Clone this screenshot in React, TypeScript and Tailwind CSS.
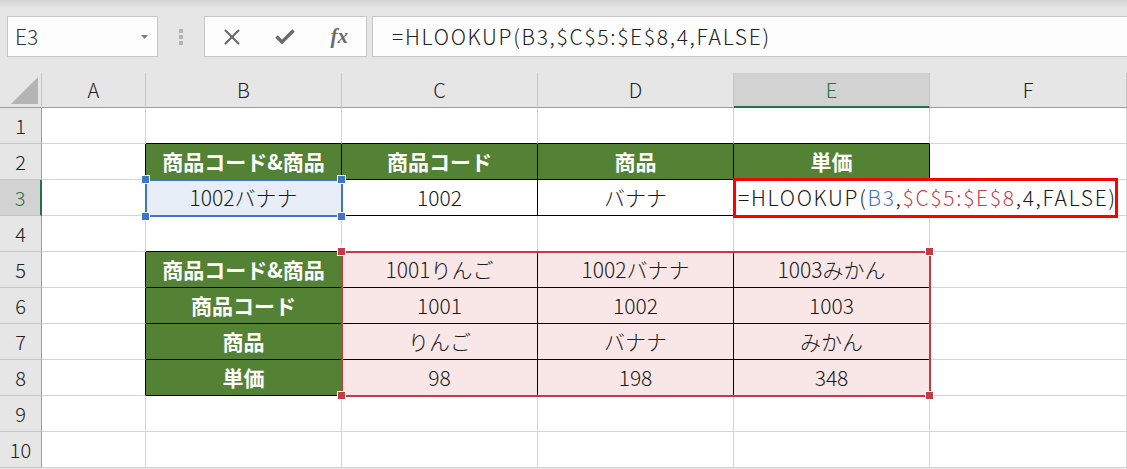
import React from "react";

const COLS = ["A", "B", "C", "D", "E", "F"];
const ROWS = [1, 2, 3, 4, 5, 6, 7, 8, 9, 10];

type Kind = "head" | "pink" | "sel" | "plain" | "formula";
type Cell = { text?: React.ReactNode; kind: Kind };

const heads = ["商品コード&商品", "商品コード", "商品", "単価"];
const lookup = [
  ["1001りんご", "1002バナナ", "1003みかん"],
  ["1001", "1002", "1003"],
  ["りんご", "バナナ", "みかん"],
  ["98", "198", "348"],
];

function inTable(r: number, c: number) {
  if (c < 1 || c > 4) return false;
  return r === 2 || r === 3 || (r >= 5 && r <= 8);
}

function FormulaText({ colored }: { colored?: boolean }) {
  return (
    <span className="tracking-[1.7px]">
      =HLOOKUP(
      <span className={colored ? "text-[#3f73c6]" : ""}>B3</span>,
      <span className={colored ? "text-[#c8414a]" : ""}>$C$5:$E$8</span>
      ,4,FALSE)
    </span>
  );
}

function cellAt(r: number, c: number): Cell {
  if (r === 2 && c >= 1 && c <= 4) return { text: heads[c - 1], kind: "head" };
  if (r >= 5 && r <= 8 && c === 1) return { text: heads[r - 5], kind: "head" };
  if (r >= 5 && r <= 8 && c >= 2 && c <= 4) return { text: lookup[r - 5][c - 2], kind: "pink" };
  if (r === 3 && c === 1) return { text: "1002バナナ", kind: "sel" };
  if (r === 3 && c === 2) return { text: "1002", kind: "plain" };
  if (r === 3 && c === 3) return { text: "バナナ", kind: "plain" };
  if (r === 3 && c === 4) return { text: <FormulaText colored />, kind: "formula" };
  return { kind: "plain" };
}

const bgOf: Record<Kind, string> = {
  head: "bg-[#548235] text-white font-bold",
  pink: "bg-[#f9e7e8] text-[#1a1a1a] font-light",
  sel: "bg-[#e8eef8] text-[#1a1a1a] font-light",
  plain: "bg-white text-[#1a1a1a] font-light",
  formula: "bg-white text-[#1a1a1a] font-light",
};

function Handle({ pos, color }: { pos: string; color: string }) {
  return <div className={`absolute h-[9px] w-[9px] border border-white ${color} ${pos}`} />;
}

function Toolbar() {
  return (
    <div className="flex h-[73px] items-start bg-[linear-gradient(to_bottom,#d3d3d3_0px,#e6e6e6_9px)] pt-[16px]">
      {/* name box */}
      <div className="ml-[7px] flex h-[41px] w-[151px] items-center justify-between border border-[#c6c6c6] bg-[#fdfdfd] pl-[7px] pr-[9px]">
        <span className="text-[21px] font-light text-[#333]">E3</span>
        <svg width="7" height="4" viewBox="0 0 7 4">
          <path d="M0 0h7L3.5 4z" fill="#7a7a7a" />
        </svg>
      </div>
      <div className="flex h-[41px] w-[46px] flex-col items-center justify-center gap-[2px]">
        <div className="h-[4px] w-[4px] bg-[#b3b3b3]" />
        <div className="h-[4px] w-[4px] bg-[#b3b3b3]" />
        <div className="h-[4px] w-[4px] bg-[#b3b3b3]" />
      </div>
      {/* cancel / enter / fx */}
      <div className="grid h-[41px] w-[163px] grid-cols-3 items-center border border-[#c6c6c6] bg-[#fdfdfd]">
        <div className="flex justify-center">
          <svg width="18" height="16" viewBox="0 0 18 16">
            <path d="M2 1l14 14M16 1L2 15" stroke="#6b6b6b" strokeWidth="2.2" />
          </svg>
        </div>
        <div className="flex justify-center">
          <svg width="20" height="15" viewBox="0 0 20 15">
            <path d="M1.5 7.5l5.5 5.5L18.5 1.5" stroke="#6b6b6b" strokeWidth="3.4" fill="none" />
          </svg>
        </div>
        <div className="flex justify-center">
          <span className="font-['Liberation_Serif',serif] text-[21px] font-bold italic text-[#6b6b6b]">fx</span>
        </div>
      </div>
      {/* formula input */}
      <div className="ml-[5px] flex h-[41px] flex-1 items-center border border-r-0 border-[#c6c6c6] bg-[#fdfdfd] pl-[19px] text-[21px] font-light text-[#222]">
        <FormulaText />
      </div>
    </div>
  );
}

export default function App() {
  return (
    <div className="h-[469px] w-[1127px] overflow-hidden bg-[#e6e6e6] font-['Noto_Sans_CJK_JP','Noto_Sans',sans-serif]">
      <Toolbar />
      <div className="relative grid grid-cols-[42px_104px_196px_196px_196px_196px_1fr] grid-rows-[35px_repeat(10,36px)] bg-white">
        {/* corner */}
        <div className="flex items-end justify-end border-b border-r border-b-[#9e9e9e] border-r-[#c6c6c6] bg-[#e6e6e6] pb-[3px] pr-[3px]">
          <svg width="27" height="27" viewBox="0 0 27 27">
            <path d="M27 0V27H0z" fill="#b4b4b4" />
          </svg>
        </div>
        {COLS.map((col) =>
          col === "E" ? (
            <div
              key={col}
              className="flex items-center justify-center border-b-2 border-r border-b-[#217346] border-r-[#c6c6c6] bg-[#d2d2d2] text-[20px] font-light text-[#217346]"
            >
              {col}
            </div>
          ) : (
            <div
              key={col}
              className="flex items-center justify-center border-b border-r border-b-[#9e9e9e] border-r-[#c6c6c6] bg-[#e6e6e6] text-[20px] font-light text-[#222]"
            >
              {col}
            </div>
          )
        )}

        {ROWS.map((r) => (
          <React.Fragment key={r}>
            {r === 3 ? (
              <div className="flex items-center justify-center border-b border-r-2 border-b-[#c6c6c6] border-r-[#217346] bg-[#d2d2d2] text-[20px] font-light text-[#217346]">
                {r}
              </div>
            ) : (
              <div className="flex items-center justify-center border-b border-r border-b-[#c6c6c6] border-r-[#9e9e9e] bg-[#e6e6e6] text-[20px] font-light text-[#222]">
                {r}
              </div>
            )}
            {COLS.map((_, c) => {
              const cell = cellAt(r, c);
              const rightBlack = inTable(r, c) || inTable(r, c + 1);
              const bottomBlack = inTable(r, c) || inTable(r + 1, c);
              const isFormula = cell.kind === "formula";
              const rightCls = isFormula
                ? "border-r-white"
                : rightBlack
                ? "border-r-black"
                : "border-r-[#d4d4d4]";
              const bottomCls = bottomBlack ? "border-b-black" : "border-b-[#d4d4d4]";
              return (
                <div
                  key={c}
                  className={`flex items-center whitespace-nowrap border-b border-r text-[21px] ${rightCls} ${bottomCls} ${bgOf[cell.kind]} ${
                    isFormula ? "justify-start overflow-visible pl-[4px]" : "justify-center"
                  }`}
                >
                  {cell.text !== undefined && <span className="relative z-10">{cell.text}</span>}
                </div>
              );
            })}
          </React.Fragment>
        ))}

        {/* B3 reference highlight */}
        <div className="absolute left-[145px] top-[106px] h-[38px] w-[198px] border-2 border-[#3e75c9]" />
        <Handle pos="left-[141px] top-[102px]" color="bg-[#3e75c9]" />
        <Handle pos="left-[337px] top-[102px]" color="bg-[#3e75c9]" />
        <Handle pos="left-[141px] top-[139px]" color="bg-[#3e75c9]" />
        <Handle pos="left-[337px] top-[139px]" color="bg-[#3e75c9]" />

        {/* lookup range highlight */}
        <div className="absolute left-[341px] top-[178px] h-[146px] w-[590px] border-2 border-[#c43b45]" />
        <Handle pos="left-[337px] top-[174px]" color="bg-[#c43b45]" />
        <Handle pos="left-[925px] top-[174px]" color="bg-[#c43b45]" />
        <Handle pos="left-[337px] top-[318px]" color="bg-[#c43b45]" />
        <Handle pos="left-[925px] top-[318px]" color="bg-[#c43b45]" />

        {/* annotation box around E3 */}
        <div className="absolute left-[733px] top-[105px] z-20 h-[40px] w-[385px] border-[3px] border-[#ff0000]" />
      </div>
    </div>
  );
}
